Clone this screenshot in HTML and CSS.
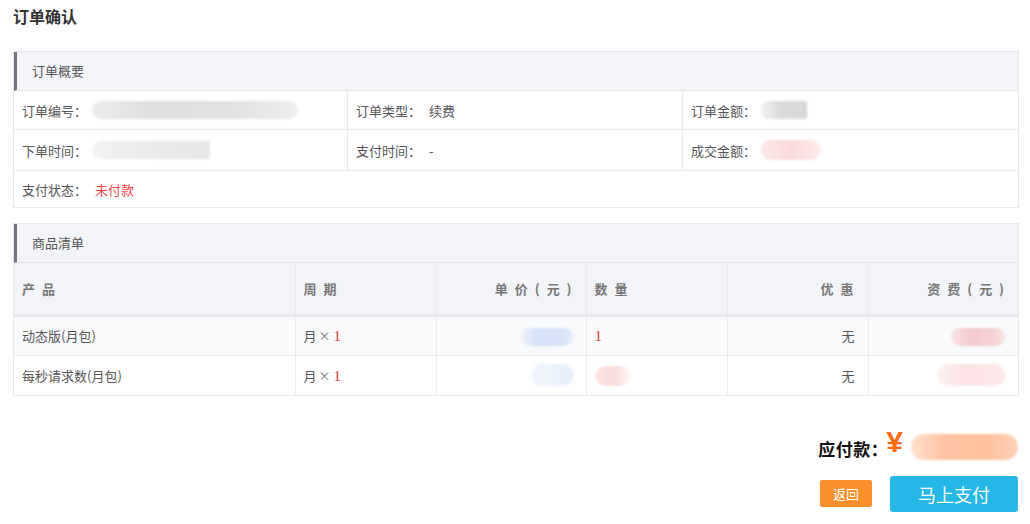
FILE: index.html
```html
<!DOCTYPE html>
<html lang="zh-CN">
<head>
<meta charset="utf-8">
<title>订单确认</title>
<link rel="stylesheet" href="styles.css">
</head>
<body>
<div class="page">
  <h1 class="title">订单确认</h1>

  <section class="panel">
    <div class="panel-head">订单概要</div>
    <div class="summary">
      <div class="cell">订单编号：<span class="blob blob-gray" style="width:206px"></span></div>
      <div class="cell">订单类型：<span class="val">续费</span></div>
      <div class="cell">订单金额：<span class="blob blob-gray2" style="width:46px"></span></div>
      <div class="cell">下单时间：<span class="blob blob-gray3" style="width:118px"></span></div>
      <div class="cell">支付时间：<span class="val">-</span></div>
      <div class="cell">成交金额：<span class="blob blob-pink" style="width:60px"></span></div>
      <div class="cell span3">支付状态：<span class="val red">未付款</span></div>
    </div>
  </section>

  <section class="panel panel2">
    <div class="panel-head">商品清单</div>
    <table class="goods">
      <colgroup>
        <col style="width:281px"><col style="width:141px"><col style="width:150px"><col style="width:141px"><col style="width:141px"><col>
      </colgroup>
      <thead>
        <tr>
          <th>产 品</th>
          <th>周 期</th>
          <th class="r">单 价 ( 元 )</th>
          <th>数 量</th>
          <th class="r">优 惠</th>
          <th class="r">资 费 ( 元 )</th>
        </tr>
      </thead>
      <tbody>
        <tr class="alt">
          <td>动态版(月包)</td>
          <td>月<span class="times">×</span><span class="num">1</span></td>
          <td class="r"><span class="blob blob-blue" style="width:52px"></span></td>
          <td><span class="num">1</span></td>
          <td class="r">无</td>
          <td class="r"><span class="blob blob-rose" style="width:54px"></span></td>
        </tr>
        <tr>
          <td>每秒请求数(月包)</td>
          <td>月<span class="times">×</span><span class="num">1</span></td>
          <td class="r"><span class="blob blob-blue2" style="width:42px"></span></td>
          <td><span class="blob blob-pink2" style="width:36px"></span></td>
          <td class="r">无</td>
          <td class="r"><span class="blob blob-pink3" style="width:68px"></span></td>
        </tr>
      </tbody>
    </table>
  </section>

  <div class="pay">
    <div class="total">
      <span class="total-label">应付款：</span>
      <span class="yen">¥</span>
      <span class="blob blob-peach"></span>
    </div>
    <div class="actions">
      <button class="btn-back">返回</button>
      <button class="btn-pay">马上支付</button>
    </div>
  </div>
</div>
</body>
</html>
```

FILE: styles.css
```css
* { box-sizing: border-box; }
html, body { margin: 0; padding: 0; background: #fff; }
body {
  font-family: "Noto Sans CJK SC", "Microsoft YaHei", "Liberation Sans", sans-serif;
  font-size: 13px;
  color: #555;
}
.page { padding: 0 12px 0 13px; width: 1030px; }
.title {
  margin: 0;
  padding-top: 5px;
  height: 51px;
  font-size: 16px;
  font-weight: bold;
  color: #333;
  line-height: 22px;
}
.panel { border: 1px solid #e6e8ec; border-bottom: none; width: 1006px; }
.panel2 { margin-top: 15px; }
.panel-head {
  height: 39px;
  line-height: 37px;
  background: #f3f4f8;
  border-left: 3px solid #777380;
  border-bottom: 1px solid #e3e5ea;
  padding-left: 15px;
  color: #555;
  font-size: 13px;
}
.summary {
  display: grid;
  grid-template-columns: 334px 335px 1fr;
}
.cell {
  height: 39px;
  display: flex;
  align-items: center;
  padding-left: 8px;
  border-bottom: 1px solid #e8eaee;
  border-right: 1px solid #e8eaee;
  color: #555;
}
.cell:nth-child(3n) { border-right: none; }
.cell:nth-child(4), .cell:nth-child(5), .cell:nth-child(6) { height: 41px; }
.cell.span3 { grid-column: 1 / 4; height: 37px; border-right: none; }
.val { margin-left: 8px; }
.cell .blob { margin-left: 5px; }
.red { color: #f04848; }

.blob {
  display: inline-block;
  height: 18px;
  border-radius: 9px;
  vertical-align: middle;
  filter: blur(1px);
}
.blob-gray { background: linear-gradient(90deg, #ececec, #dedede 30%, #e2e2e2 70%, #eeeeee); }
.blob-gray2 { background: linear-gradient(90deg, #f2f2f2, #dcdcdc 40%, #d8d8d8); border-radius: 8px 2px 2px 8px; }
.blob-gray3 { background: linear-gradient(90deg, #f2f2f2, #ebebeb 50%, #e6e6e6); border-radius: 9px 0 0 9px; }
.blob-pink { background: linear-gradient(90deg, #fde8e8, #fbd9da 50%, #fdeaea); height: 20px; border-radius: 10px; }
.blob-blue { background: linear-gradient(90deg, #eef3fb, #d5e3f6 30%, #d7e4f6 80%, #e4ecf8); }
.blob-blue2 { background: linear-gradient(90deg, #f1f5fc, #e6eefb); height: 22px; border-radius: 11px; }
.blob-pink2 { background: linear-gradient(90deg, #fbe6e6, #f8dcdc 50%, #fdf3f3); height: 20px; border-radius: 10px; }
.blob-rose { background: linear-gradient(90deg, #f8e2e3, #f4cacd 40%, #f6d3d5 80%, #f8e2e3); }
.blob-pink3 { background: linear-gradient(90deg, #fdf0f0, #fbe4e6 40%, #fde9ea); height: 22px; border-radius: 11px; }
.blob-peach { width: 107px; height: 26px; border-radius: 13px; background: linear-gradient(90deg, #ffe2cf, #ffc3a2 30%, #ffc09c 70%, #ffd0b5); }

.goods {
  width: 1004px;
  border-collapse: collapse;
  table-layout: fixed;
}
.goods th, .goods td {
  border-right: 1px solid #ebecef;
  border-bottom: 1px solid #ebecef;
  text-align: left;
  padding: 0 8px;
}
.goods th:last-child, .goods td:last-child { border-right: none; }
.goods th {
  height: 52px;
  background: #f3f4f8;
  font-weight: bold;
  color: #777;
  font-size: 13px;
  letter-spacing: 2px;
  border-bottom: 3px solid #e8e9ec;
}
.goods td { height: 40px; color: #555; }
.goods tr.alt td { background: #f9fafc; }
.goods .r { text-align: right; padding-right: 13px; }
.goods th.r { padding-right: 12px; }
.times { color: #777; font-size: 12px; margin: 0 3px 0 2px; }
.num { color: #e8383d; font-family: "Liberation Serif", serif; font-size: 15px; }

.pay {
  display: flex;
  flex-direction: column;
  align-items: flex-end;
  width: 1005px;
  margin-top: 31px;
}
.total { display: flex; align-items: center; height: 40px; }
.total-label { font-size: 17px; font-weight: bold; color: #111; margin-top: 4px; letter-spacing: 0.5px; }
.yen { font-size: 30px; font-weight: bold; color: #ff6a10; font-family: "Liberation Sans", sans-serif; margin: -10px 8px 0 -2px; line-height: 30px; }
.actions { display: flex; align-items: center; gap: 18px; margin-top: 9px; }
.btn-back {
  border: none;
  background: #fa8f2c;
  color: #fff;
  font-family: inherit;
  font-size: 13px;
  width: 52px;
  height: 27px;
  border-radius: 2px;
  padding: 0;
}
.btn-pay {
  border: none;
  background: #25b8e6;
  color: #fff;
  font-family: inherit;
  font-size: 18px;
  width: 128px;
  height: 36px;
  border-radius: 3px;
  padding: 0;
}
```
